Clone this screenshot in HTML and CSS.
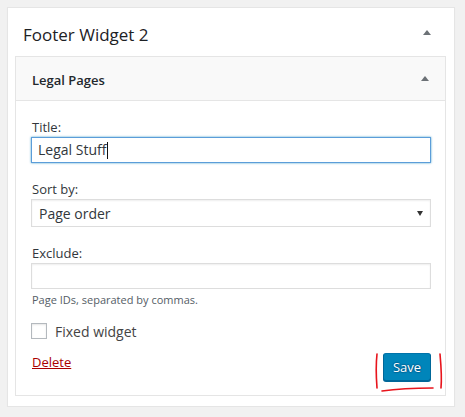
FILE: index.html
```html
<!DOCTYPE html>
<html lang="en">
<head>
<meta charset="utf-8">
<title>Footer Widget 2</title>
<link rel="stylesheet" href="styles.css">
</head>
<body>
<div class="sidebar">
  <div class="sidebar-head">
    <h2 class="sidebar-title">Footer Widget 2</h2>
    <span class="toggle"></span>
  </div>
  <div class="widget">
    <div class="widget-head">
      <h3 class="widget-title">Legal Pages</h3>
      <span class="toggle"></span>
    </div>
    <div class="widget-body">
      <label class="label">Title:</label>
      <div class="textbox focus"><span>Legal Stuff</span><span class="caret"></span></div>
      <label class="label gap">Sort by:</label>
      <div class="select-wrap">
        <select class="select"><option>Page order</option></select>
      </div>
      <label class="label gap">Exclude:</label>
      <div class="textbox"></div>
      <p class="desc">Page IDs, separated by commas.</p>
      <label class="check-row"><span class="checkbox"></span><span>Fixed widget</span></label>
      <div class="actions">
        <a class="delete" href="#">Delete</a>
        <div class="save-wrap">
          <button class="save">Save</button>
          <svg class="scribble" width="74" height="44" viewBox="0 0 74 44">
            <path d="M6 1 C5 10 5 22 6 35" fill="none" stroke="#e8141c" stroke-width="1.6" stroke-linecap="round"/>
            <path d="M69 1 C70 12 71 24 70 35" fill="none" stroke="#e8141c" stroke-width="1.6" stroke-linecap="round"/>
            <path d="M11 38 C25 36 44 35 62 35" fill="none" stroke="#e8141c" stroke-width="1.6" stroke-linecap="round"/>
          </svg>
        </div>
      </div>
    </div>
  </div>
</div>
</body>
</html>
```

FILE: styles.css
```css
* { box-sizing: border-box; }
html, body { margin: 0; }
body {
  background: #f1f1f1;
  padding: 7px 10px 0 7px;
  font-family: "Open Sans", "Noto Sans", sans-serif;
  color: #23282d;
  font-size: 13px;
}
.sidebar {
  background: #fff;
  border: 1px solid #e5e5e5;
  box-shadow: 0 1px 1px rgba(0,0,0,.04);
  padding: 0 8px 10px 7px;
  width: 448px;
}
.sidebar-head {
  height: 48px;
  display: flex;
  align-items: center;
  justify-content: space-between;
  padding: 0 0 0 8px;
}
.sidebar-title {
  margin: 0;
  font-size: 17px;
  font-weight: 400;
  color: #1d2125;
  position: relative;
  top: 2px;
}
.toggle {
  width: 0; height: 0;
  border-left: 4px solid transparent;
  border-right: 4px solid transparent;
  border-bottom: 5px solid #6c7176;
  margin-right: 15px;
}
.widget {
  border: 1px solid #e5e5e5;
}
.widget-head {
  background: #f9f9f9;
  height: 44px;
  border-bottom: 1px solid #e5e5e5;
  display: flex;
  align-items: center;
  justify-content: space-between;
  padding-left: 16px;
}
.widget-head .toggle { margin-right: 16px; }
.widget-title {
  margin: 0;
  font-size: 13px;
  font-weight: 600;
  color: #23282d;
  position: relative;
  top: 1px;
}
.widget-body {
  padding: 17px 14px 14px 15px;
  display: flex;
  flex-direction: column;
}
.label {
  display: block;
  line-height: 18px;
  height: 18px;
  margin: 0 0 1px 1px;
  color: #32373c;
}
.label.gap { margin-top: 17px; }
.textbox {
  height: 26px;
  border: 1px solid #ddd;
  box-shadow: inset 0 1px 2px rgba(0,0,0,.07);
  background: #fff;
  font-size: 14px;
  line-height: 24px;
  padding: 0 6px;
  display: flex;
  align-items: center;
  color: #32373c;
}
.textbox.focus {
  border-color: #5b9dd9;
  box-shadow: 0 0 2px rgba(30,140,190,.8);
}
.caret {
  display: inline-block;
  width: 1px;
  height: 17px;
  background: #111;
  margin-left: 1px;
}
.select-wrap { position: relative; }
.select-wrap::after {
  content: "";
  position: absolute;
  right: 8px;
  top: 12px;
  border-left: 3.5px solid transparent;
  border-right: 3.5px solid transparent;
  border-top: 5px solid #333;
}
.select {
  -webkit-appearance: none;
  appearance: none;
  width: 100%;
  height: 28px;
  border: 1px solid #ddd;
  border-radius: 0;
  background: #fff;
  font-family: inherit;
  font-size: 14px;
  color: #32373c;
  padding: 0 7px;
  box-shadow: inset 0 1px 2px rgba(0,0,0,.07);
  margin: 0;
}
.desc {
  margin: 3px 0 0 1px;
  font-size: 11px;
  line-height: 16px;
  color: #555d66;
}
.check-row {
  display: flex;
  align-items: center;
  margin-top: 15px;
  height: 16px;
  font-size: 14px;
  color: #444;
}
.checkbox {
  width: 16px;
  height: 16px;
  border: 1px solid #b4b9be;
  background: #fff;
  box-shadow: inset 0 1px 2px rgba(0,0,0,.1);
  margin-right: 8px;
}
.actions {
  margin-top: 14px;
  display: flex;
  justify-content: space-between;
  align-items: flex-start;
}
.delete {
  color: #a00;
  text-decoration: underline;
  font-size: 13px;
  line-height: 18px;
  margin: 0 0 0 1px;
}
.save-wrap { position: relative; }
.save {
  height: 28px;
  width: 48px;
  background: #0085ba;
  border: 1px solid #0073aa;
  border-color: #0073aa #006799 #006799;
  border-radius: 3px;
  box-shadow: 0 1px 0 #006799;
  color: #fff;
  font-family: inherit;
  font-size: 13px;
  padding: 0;
  text-shadow: 0 -1px 1px #006799, 1px 0 1px #006799, 0 1px 1px #006799, -1px 0 1px #006799;
}
.scribble {
  position: absolute;
  left: -12px;
  top: 0;
  pointer-events: none;
}
```
